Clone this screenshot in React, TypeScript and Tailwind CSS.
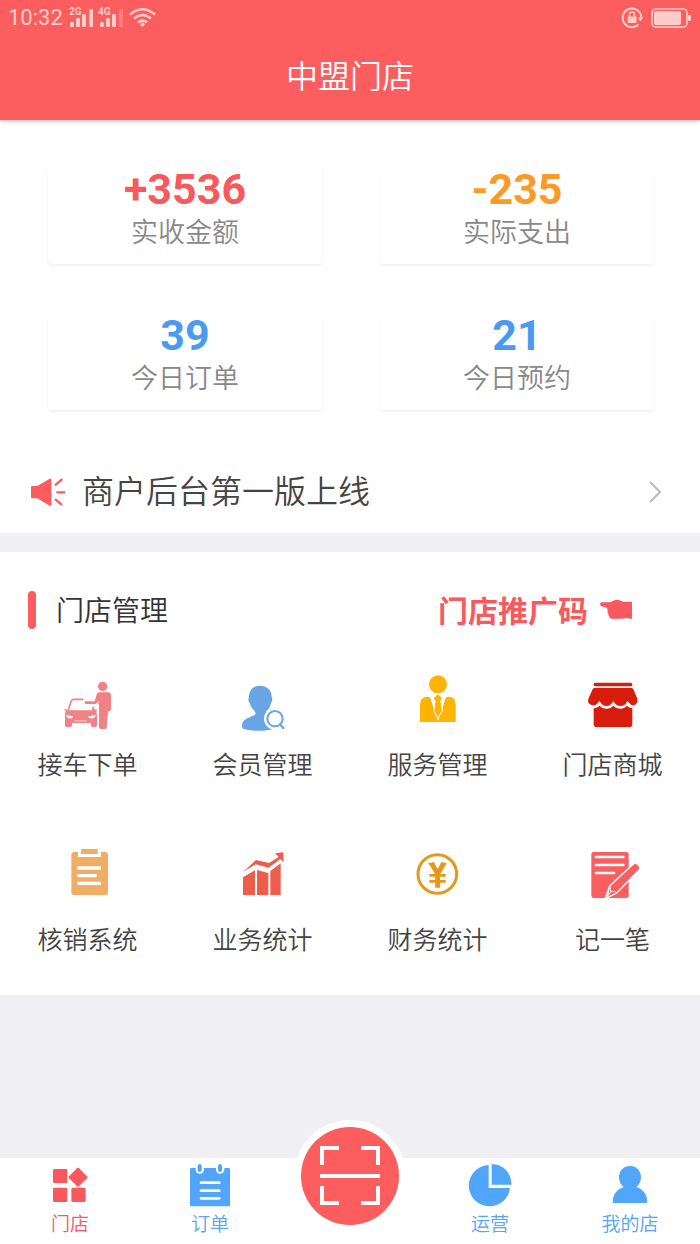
import type { ReactNode } from "react";

type Stat = { value: string; label: string; color: string };
type Entry = { label: string; icon: ReactNode };
type Tab = Entry & { href: string; color: string };

const stats: Stat[] = [
  { value: "+3536", label: "实收金额", color: "text-[#f75a5e]" },
  { value: "-235", label: "实际支出", color: "text-[#fb9b27]" },
  { value: "39", label: "今日订单", color: "text-[#4a9bf0]" },
  { value: "21", label: "今日预约", color: "text-[#4a9bf0]" },
];

const entries: Entry[] = [
  { label: "接车下单", icon: <CarIcon /> },
  { label: "会员管理", icon: <MemberIcon /> },
  { label: "服务管理", icon: <ServiceIcon /> },
  { label: "门店商城", icon: <ShopIcon /> },
  { label: "核销系统", icon: <ClipboardIcon /> },
  { label: "业务统计", icon: <ChartIcon /> },
  { label: "财务统计", icon: <YuanIcon /> },
  { label: "记一笔", icon: <NoteIcon /> },
];

const leftTabs: Tab[] = [
  { label: "门店", href: "#store", color: "text-[#f9595c]", icon: <StoreTabIcon /> },
  { label: "订单", href: "#orders", color: "text-[#55a5f9]", icon: <OrderTabIcon /> },
];

const rightTabs: Tab[] = [
  { label: "运营", href: "#operation", color: "text-[#55a5f9]", icon: <PieTabIcon /> },
  { label: "我的店", href: "#mine", color: "text-[#55a5f9]", icon: <MineTabIcon /> },
];

export default function App() {
  return (
    <div className="flex min-h-screen flex-col bg-[#efeff4] font-['Roboto','Noto_Sans_CJK_SC',sans-serif]">
      <header className="relative bg-[#fc5d5e] pb-[2px] shadow-[0_1px_4px_rgba(0,0,0,0.3)]">
        <StatusBar />
        <h1 className="text-center text-[32px] leading-[82px] font-[350] text-white">中盟门店</h1>
      </header>

      <main className="flex-1">
        <section className="bg-white pt-[47px]">
          <div className="grid grid-cols-2 gap-x-[58px] gap-y-[49px] pr-[46px] pl-12">
            {stats.map((stat) => (
              <StatCard key={stat.label} stat={stat} />
            ))}
          </div>
          <button
            type="button"
            className="mt-[37px] flex h-[86px] w-full items-center pr-[38px] pl-[31px] text-left"
          >
            <HornIcon />
            <span className="mt-1 ml-4 flex-1 truncate text-[32px] leading-[48px] font-[350] text-[#444]">
              商户后台第一版上线
            </span>
            <svg className="mt-1 h-6 w-[13px]" viewBox="0 0 13 24" fill="none" aria-hidden="true">
              <path d="M1 2l10 10L1 22" stroke="#b8b8b8" strokeWidth="2" />
            </svg>
          </button>
        </section>

        <section className="mt-[19px] bg-white pt-[38px]">
          <div className="flex h-[55px] items-start pr-[68px] pl-7">
            <span className="mt-px h-[38px] w-2 rounded-full bg-[#fa5c5f]" />
            <h2 className="ml-5 flex-1 text-[28px] leading-[44px] font-[350] text-[#333]">门店管理</h2>
            <a
              href="#promo-code"
              className="flex items-start gap-3 text-[30px] leading-[44px] font-bold text-[#f75a5e]"
            >
              门店推广码
              <HandIcon />
            </a>
          </div>
          <div className="grid grid-cols-4">
            {entries.map((entry) => (
              <button
                key={entry.label}
                type="button"
                className="flex h-[175px] flex-col items-center pt-7"
              >
                {entry.icon}
                <span className="mt-[10px] text-[25px] leading-9 font-[350] text-[#444]">
                  {entry.label}
                </span>
              </button>
            ))}
          </div>
        </section>
      </main>

      <nav className="grid h-[86px] grid-cols-5 bg-white">
        {leftTabs.map((tab) => (
          <TabLink key={tab.href} tab={tab} />
        ))}
        <div className="relative flex justify-center">
          <button
            type="button"
            aria-label="扫一扫"
            className="absolute -top-[38px] flex size-28 items-center justify-center rounded-full bg-white"
          >
            <ScanIcon />
          </button>
        </div>
        {rightTabs.map((tab) => (
          <TabLink key={tab.href} tab={tab} />
        ))}
      </nav>
    </div>
  );
}

function StatCard({ stat }: { stat: Stat }) {
  return (
    <div className="rounded-sm pb-[9px] text-center shadow-[0_2px_3px_rgba(0,0,0,0.06)]">
      <p className={`text-[43px] leading-[44px] font-bold ${stat.color}`}>{stat.value}</p>
      <p className="text-[27px] leading-[44px] font-[350] text-[#888]">{stat.label}</p>
    </div>
  );
}

function TabLink({ tab }: { tab: Tab }) {
  return (
    <a href={tab.href} className={`flex flex-col items-center pt-[5px] ${tab.color}`}>
      {tab.icon}
      <span className="mt-[6px] text-[19px] leading-6 font-[350]">{tab.label}</span>
    </a>
  );
}

function StatusBar() {
  return (
    <div className="flex h-9 items-center justify-between pr-[9px] pl-2 text-[#ffcdc8]">
      <div className="flex items-center">
        <span className="text-[22px] leading-9">10:32</span>
        <svg className="ml-[6px] h-6 w-[88px]" viewBox="0 0 88 24" fill="currentColor" aria-hidden="true">
          <text x="0" y="9" fontSize="10" fontWeight="700">2G</text>
          <rect x="1" y="16" width="4" height="5" rx="1" />
          <rect x="7" y="12" width="4" height="9" rx="1" />
          <rect x="13" y="8" width="4" height="13" rx="1" />
          <rect x="20" y="3" width="4" height="18" rx="1" />
          <text x="29" y="9" fontSize="10" fontWeight="700">4G</text>
          <rect x="31" y="16" width="4" height="5" rx="1" />
          <rect x="37" y="12" width="4" height="9" rx="1" />
          <rect x="43" y="8" width="4" height="13" rx="1" />
          <rect x="50" y="3" width="4" height="18" rx="1" opacity="0.3" />
          <g fill="none" stroke="currentColor" strokeWidth="2.600">
            <path d="M61 8.500q12.500-10.500 25 0" />
            <path d="M65 12.500q8.500-7 17 0" />
            <path d="M69 16.500q4.500-3.600 9 0" />
          </g>
          <circle cx="73.500" cy="18.500" r="2" />
        </svg>
      </div>
      <div className="flex items-center gap-2">
        <svg className="size-[22px]" viewBox="0 0 22 22" fill="none" stroke="currentColor" aria-hidden="true">
          <path d="M17.500 17.500A9.300 9.300 0 1 1 20.300 11" strokeWidth="2" />
          <path d="M17 10.500h5l-2.500 4z" fill="currentColor" stroke="none" />
          <rect x="6.500" y="9.500" width="9" height="6.500" rx="1" fill="currentColor" stroke="none" />
          <path d="M8.500 10V7.500a2.500 2.500 0 0 1 5 0V10" strokeWidth="1.500" />
        </svg>
        <svg className="h-5 w-10" viewBox="0 0 40 20" fill="currentColor" aria-hidden="true">
          <rect x="1" y="1" width="35" height="18" rx="4" fill="none" stroke="currentColor" strokeWidth="1.600" />
          <rect x="3" y="3" width="27" height="14" rx="2" />
          <path d="M37 7h2q1 0 1 1v4q0 1-1 1h-2z" />
        </svg>
      </div>
    </div>
  );
}

function HornIcon() {
  return (
    <svg className="mt-1 h-7 w-[35px]" viewBox="93 53 105 84" fill="#fa5c5f" aria-hidden="true">
      <path d="M96 77h16l37-22q5-2 5 3v75q0 5-5 3l-37-22H96q-3 0-3-3V80q0-3 3-3z" />
      <path d="M167 73l18-15M172 96h21M167 118l17 14" stroke="#fa5c5f" strokeWidth="7" strokeLinecap="round" />
    </svg>
  );
}

function HandIcon() {
  return (
    <svg className="mt-[9px] h-5 w-8" viewBox="540 416 96 60" fill="currentColor" aria-hidden="true">
      <path d="M546 426h25l14-7q6-2 12 0l12 5h25q2 0 2 2v48q0 2-3 2l-14-3q-6 2-12 2h-32q-6 0-7-6-4-4-3-9-4-4-2-9l-2-8-16-5q-5-2-5-7 1-5 6-5z" />
    </svg>
  );
}

function CarIcon() {
  return (
    <svg className="size-[65px]" viewBox="105 39 195 195" fill="#f08185" aria-hidden="true">
      <circle cx="248" cy="79" r="14" />
      <path d="M237 97h27q9 1 9 10v42q0 4-5 4l-4 3-4 47q-1 4-6 4h-12q-5 0-5-5v-67l-2-4v-9l-7 10h-30q-4 0-4-4t4-4h26l6-21q2-6 7-6z" />
      <path d="M145 149l9-26q2-5 8-5h26" fill="none" stroke="#f08185" strokeWidth="5" strokeLinecap="round" />
      <path d="M134 147q5-1 7 4h74q2-6 4-13 5 4 3 10l9 1q3 5-3 6 3 5 3 12v29q0 5-5 5h-8q-5 0-5-5v-7h-57v7q0 5-5 5h-11q-5 0-5-5v-31q0-7 3-11-6-2-4-7z" />
      <path d="M139 164l21 6q-3 7-15 5-6-2-6-11zM227 164l-23 6q3 7 15 5 8-3 8-11z" fill="white" />
      <path d="M161 180h41l-3 6h-35z" fill="white" opacity="0.35" />
    </svg>
  );
}

function MemberIcon() {
  return (
    <svg className="size-[65px]" viewBox="630 39 195 195" fill="#68a5e5" aria-hidden="true">
      <path d="M720 77c20 0 35 13 35 34 3 3 2 15-2 18-2 12-8 19-14 25-2 8 0 13 6 17l16 36c-24 7-62 7-87 1q-9-2-8-13c1-20 28-23 38-30 4-4 3-9-1-13-7-6-12-13-13-22-5-3-6-15-3-18 0-22 13-35 33-35z" />
      <circle cx="765" cy="176" r="33" fill="white" />
      <circle cx="765" cy="176" r="23" fill="none" stroke="#68a5e5" strokeWidth="6" />
      <path d="M781 194l9 10" stroke="#68a5e5" strokeWidth="7" strokeLinecap="round" />
    </svg>
  );
}

function ServiceIcon() {
  return (
    <svg className="size-[65px]" viewBox="135 39 195 195" fill="#fdb402" aria-hidden="true">
      <circle cx="234" cy="73" r="27" />
      <path d="M180 186v-52q0-24 23-24 7 0 9 6l22 66 22-66q2-6 9-6 22 0 22 24v52z" />
      <path d="M234 102l13 12-5 10 6 27-14 24-14-24 6-27-6-10z" stroke="white" strokeWidth="3" />
      <path d="M211 112l23 70 23-70-8-1-15 66-15-66z" fill="white" />
      <path d="M234 103l11 11-5 9 5 28-11 22-11-22 5-28-5-9z" />
    </svg>
  );
}

function ShopIcon() {
  return (
    <svg className="size-[65px]" viewBox="660 39 195 195" fill="#d91d0c" aria-hidden="true">
      <rect x="701" y="68" width="116" height="11" rx="5" />
      <path d="M703 84h111q4 0 6 4l12 28q3 9-4 16-7 5-14 3l-12-12q-6 15-20 15-15 0-22-15-7 15-21 15-13 0-20-15l-12 12q-10 4-19-4-6-6-3-15l12-27q2-5 6-5z" />
      <path d="M701 145q11-1 18-8 8 10 21 9 13 0 20-9 8 9 20 9 14 0 20-9 7 7 17 8v46q0 10-9 10h-98q-9 0-9-10z" />
    </svg>
  );
}

function ClipboardIcon() {
  return (
    <svg className="size-[65px]" viewBox="105 54 195 195" fill="#f0ae64" aria-hidden="true">
      <path d="M162 66h12v15h69V66h13q8 0 8 8v113q0 8-8 8h-94q-8 0-8-8V74q0-8 8-8z" />
      <path d="M184 57h49v15h-50z" />
      <path d="M172 114h71M172 137h58M172 160h71" stroke="white" strokeWidth="10" />
    </svg>
  );
}

function ChartIcon() {
  return (
    <svg className="size-[65px]" viewBox="630 54 195 195" fill="#f05c4c" aria-hidden="true">
      <path d="M669 142l36-21v74h-36zM711 120l34 9v66h-34zM751 123l31-23v95h-31z" />
      <path d="M669 126l39-36 39 9 29-18-11-11 25-3v30l-9-10-35 26-39-10z" />
    </svg>
  );
}

function YuanIcon() {
  return (
    <svg className="size-[65px]" viewBox="135 54 195 195" fill="none" stroke="#e39a1b" aria-hidden="true">
      <circle cx="232" cy="132" r="58" strokeWidth="9" />
      <path d="M214 99l19 32 19-32M233 127v46" strokeWidth="15" />
      <path d="M208 136h49M208 154h49" strokeWidth="8" />
      <path d="M205 101h20M242 101h17" strokeWidth="5" />
    </svg>
  );
}

function NoteIcon() {
  return (
    <svg className="size-[65px]" viewBox="660 54 195 195" fill="#f95f61" aria-hidden="true">
      <rect x="694" y="66" width="112" height="138" rx="7" />
      <path d="M708 81h82M708 105h82M708 129h54" stroke="white" strokeWidth="8" strokeLinecap="round" />
      <path d="M735 207l14-39 72-67q7-3 13 3 8 6 5 14l-69 71z" stroke="white" strokeWidth="4" />
      <path d="M749 168l4 17q12-4 17 4M749 168l-7 34 28-13M753 185l-16 20" fill="none" stroke="white" strokeWidth="3" />
    </svg>
  );
}

function StoreTabIcon() {
  return (
    <svg className="size-11" viewBox="144 159 132 132" fill="#f9595c" aria-hidden="true">
      <rect x="159" y="177" width="43" height="42" rx="4" />
      <rect x="159" y="233" width="43" height="43" rx="4" />
      <rect x="214" y="233" width="43" height="43" rx="4" />
      <path d="M231 175q3-3 6 0l24 24q3 3 0 6l-24 24q-3 3-6 0l-24-24q-3-3 0-6z" />
    </svg>
  );
}

function OrderTabIcon() {
  return (
    <svg className="size-11" viewBox="564 159 132 132" fill="#51a6fb" aria-hidden="true">
      <rect x="570" y="174" width="120" height="115" rx="4" />
      <path d="M587 172h25v8q-2 11-13 11-10 0-12-11zM648 172h25v8q-2 11-13 11-10 0-12-11z" fill="white" />
      <rect x="593" y="162" width="12" height="24" rx="6" />
      <rect x="654" y="162" width="12" height="24" rx="6" />
      <path d="M603 218h55M603 242h55M603 265h55" stroke="white" strokeWidth="8" strokeLinecap="round" />
    </svg>
  );
}

function PieTabIcon() {
  return (
    <svg className="size-11" viewBox="114 159 132 132" fill="#51a6fb" aria-hidden="true">
      <path d="M176 165v69h64a62 62 0 1 1-64-69z" />
      <path d="M185 162a59 59 0 0 1 59 62h-59z" />
    </svg>
  );
}

function MineTabIcon() {
  return (
    <svg className="size-11" viewBox="534 159 132 132" fill="#51a6fb" aria-hidden="true">
      <path d="M600 168c19 0 33 14 33 34 0 12-5 22-14 29 21 6 32 23 33 44q0 4-4 4h-96q-4 0-4-4c1-21 12-38 33-44-9-7-14-17-14-29 0-20 14-34 33-34z" />
    </svg>
  );
}

function ScanIcon() {
  return (
    <svg className="size-[98px]" viewBox="0 0 98 98" fill="none" aria-hidden="true">
      <circle cx="49" cy="49" r="49" fill="#fc5d5e" />
      <g stroke="white" strokeWidth="4">
        <path d="M21 38V21h17M60 21h17v17M21 59v17h17M60 76h17V59M19 49h60" />
      </g>
    </svg>
  );
}
